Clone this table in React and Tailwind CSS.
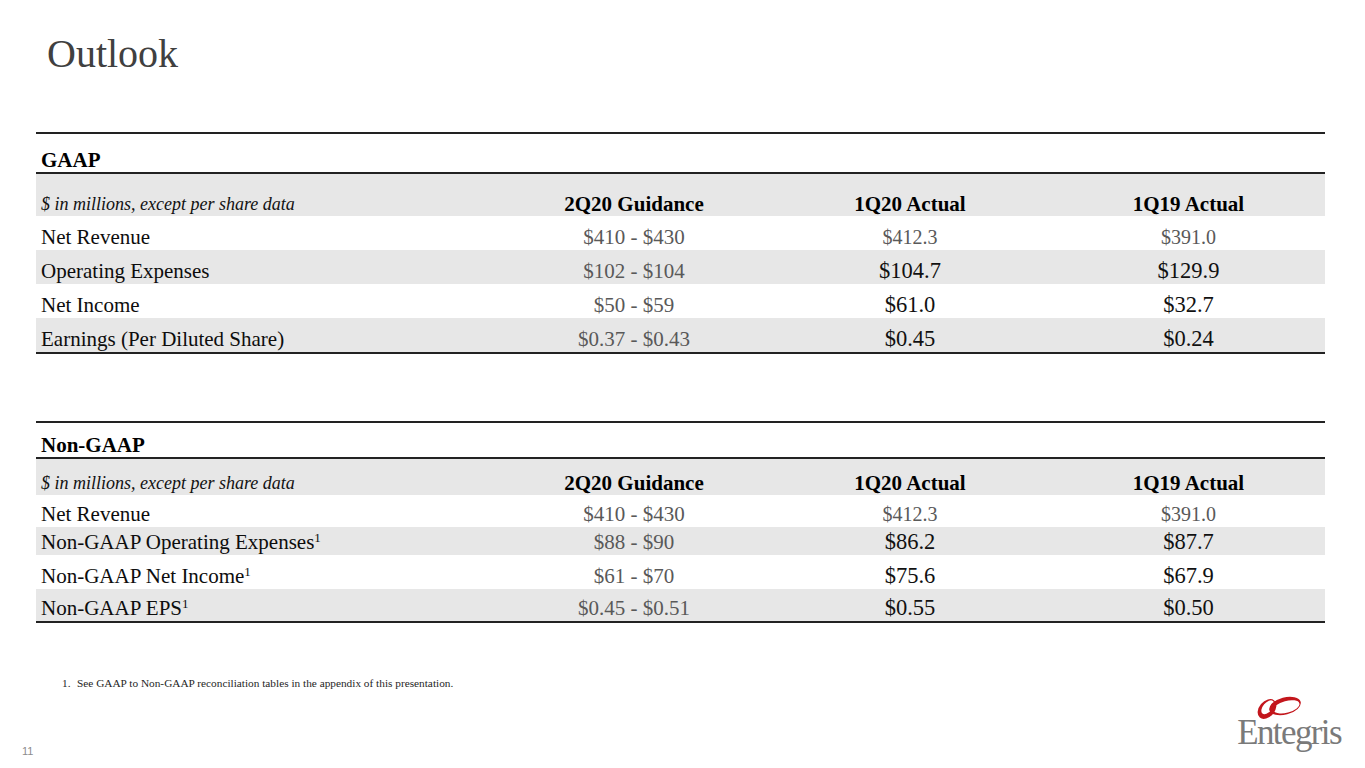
import React from 'react'

const COLS = 'grid grid-cols-[464px_268px_284px_273px]'

const gaapRows = [
  { label: 'Net Revenue', guide: '$410 - $430', q1: '$412.3', q0: '$391.0', muted: true, h: 'h-[34px]' },
  { label: 'Operating Expenses', guide: '$102 - $104', q1: '$104.7', q0: '$129.9', h: 'h-[34px]' },
  { label: 'Net Income', guide: '$50 - $59', q1: '$61.0', q0: '$32.7', h: 'h-[34px]' },
  { label: 'Earnings (Per Diluted Share)', guide: '$0.37 - $0.43', q1: '$0.45', q0: '$0.24', h: 'h-[34px]' },
]

const nonGaapRows = [
  { label: 'Net Revenue', guide: '$410 - $430', q1: '$412.3', q0: '$391.0', muted: true, h: 'h-[32px]' },
  { label: 'Non-GAAP Operating Expenses', sup: true, guide: '$88 - $90', q1: '$86.2', q0: '$87.7', h: 'h-[28px]' },
  { label: 'Non-GAAP Net Income', sup: true, guide: '$61 - $70', q1: '$75.6', q0: '$67.9', h: 'h-[34px]' },
  { label: 'Non-GAAP EPS', sup: true, guide: '$0.45 - $0.51', q1: '$0.55', q0: '$0.50', h: 'h-[32px]' },
]

function Value({ children, muted }) {
  // the net revenue actuals are set smaller and grey in the deck
  return muted ? (
    <div className="text-center text-[20px] leading-[24px] text-[#595959]">{children}</div>
  ) : (
    <div className="text-center text-[22.5px] leading-[24px] text-[#111]">{children}</div>
  )
}

function OutlookTable({ title, rows, titleH, headH }) {
  return (
    <div className="w-[1289px] ml-[36px] border-t-2 border-b-2 border-[#222]">
      <div className={`${titleH} flex items-end border-b-2 border-[#222] pl-[5px]`}>
        <span className="font-bold text-[21px] leading-[24px] text-black">{title}</span>
      </div>
      <div className={`${COLS} ${headH} items-end bg-[#e7e7e7]`}>
        <div className="pl-[5px] italic text-[18px] leading-[24px] text-[#111]">
          $ in millions, except per share data
        </div>
        <div className="text-center font-bold text-[21px] leading-[24px] text-black">2Q20 Guidance</div>
        <div className="text-center font-bold text-[21px] leading-[24px] text-black">1Q20 Actual</div>
        <div className="text-center font-bold text-[21px] leading-[24px] text-black">1Q19 Actual</div>
      </div>
      {rows.map((r, i) => (
        <div
          key={r.label}
          className={`${COLS} ${r.h} items-end pb-[1px] ${i % 2 === 1 ? 'bg-[#e7e7e7]' : 'bg-white'}`}
        >
          <div className="pl-[5px] text-[21px] leading-[24px] text-[#0d0d0d] whitespace-nowrap">
            {r.label}
            {r.sup && <span className="relative -top-[7px] text-[13px] leading-none">1</span>}
          </div>
          <div className="text-center text-[21px] leading-[24px] text-[#595959]">{r.guide}</div>
          <Value muted={r.muted}>{r.q1}</Value>
          <Value muted={r.muted}>{r.q0}</Value>
        </div>
      ))}
    </div>
  )
}

// ellipse outline as a path so two of them can be cut with evenodd
function ring(cx, cy, rx, ry) {
  return `M${cx - rx} ${cy} a${rx} ${ry} 0 1 0 ${2 * rx} 0 a${rx} ${ry} 0 1 0 ${-2 * rx} 0 Z`
}

function EntegrisLogo() {
  return (
    <div className="flex flex-col items-start mb-[10px]">
      <svg width="55" height="32" viewBox="0 0 55 32" className="ml-[14px]">
        <g transform="rotate(-50 16 19)">
          <path fillRule="evenodd" fill="#c3161c" d={ring(16, 19, 11.2, 7.8) + ring(17.8, 18.4, 8.2, 4.6)} />
        </g>
        <g transform="rotate(-15 34 16)">
          <path fillRule="evenodd" fill="#c3161c" d={ring(34, 16, 16.2, 8.6) + ring(35.2, 17.2, 13.4, 5.9)} />
        </g>
      </svg>
      <span className="-mt-[4px] text-[35px] leading-[30px] tracking-[-1.6px] text-[#7a7a7a]">Entegris</span>
    </div>
  )
}

export default function App() {
  return (
    <div className="w-[1365px] h-[768px] bg-white overflow-hidden flex flex-col font-['Liberation_Serif',serif]">
      <h1 className="pt-[34px] pl-[47px] text-[40px] leading-[40px] text-[#404040] font-normal">Outlook</h1>

      <div className="mt-[58px]">
        <OutlookTable title="GAAP" rows={gaapRows} titleH="h-[40px]" headH="h-[42px]" />
      </div>

      <div className="mt-[67px]">
        <OutlookTable title="Non-GAAP" rows={nonGaapRows} titleH="h-[36px]" headH="h-[36px]" />
      </div>

      <div className="mt-[54px] flex pl-[62px] text-[11.3px] leading-[13px] text-[#262626]">
        <span className="w-[15px]">1.</span>
        <span>See GAAP to Non-GAAP reconciliation tables in the appendix of this presentation.</span>
      </div>

      <div className="mt-auto flex items-end justify-between pl-[22px] pr-[24px] pb-[13px]">
        <span className="font-['Liberation_Sans',sans-serif] text-[11px] leading-[13px] text-[#8c8c8c]">11</span>
        <EntegrisLogo />
      </div>
    </div>
  )
}
